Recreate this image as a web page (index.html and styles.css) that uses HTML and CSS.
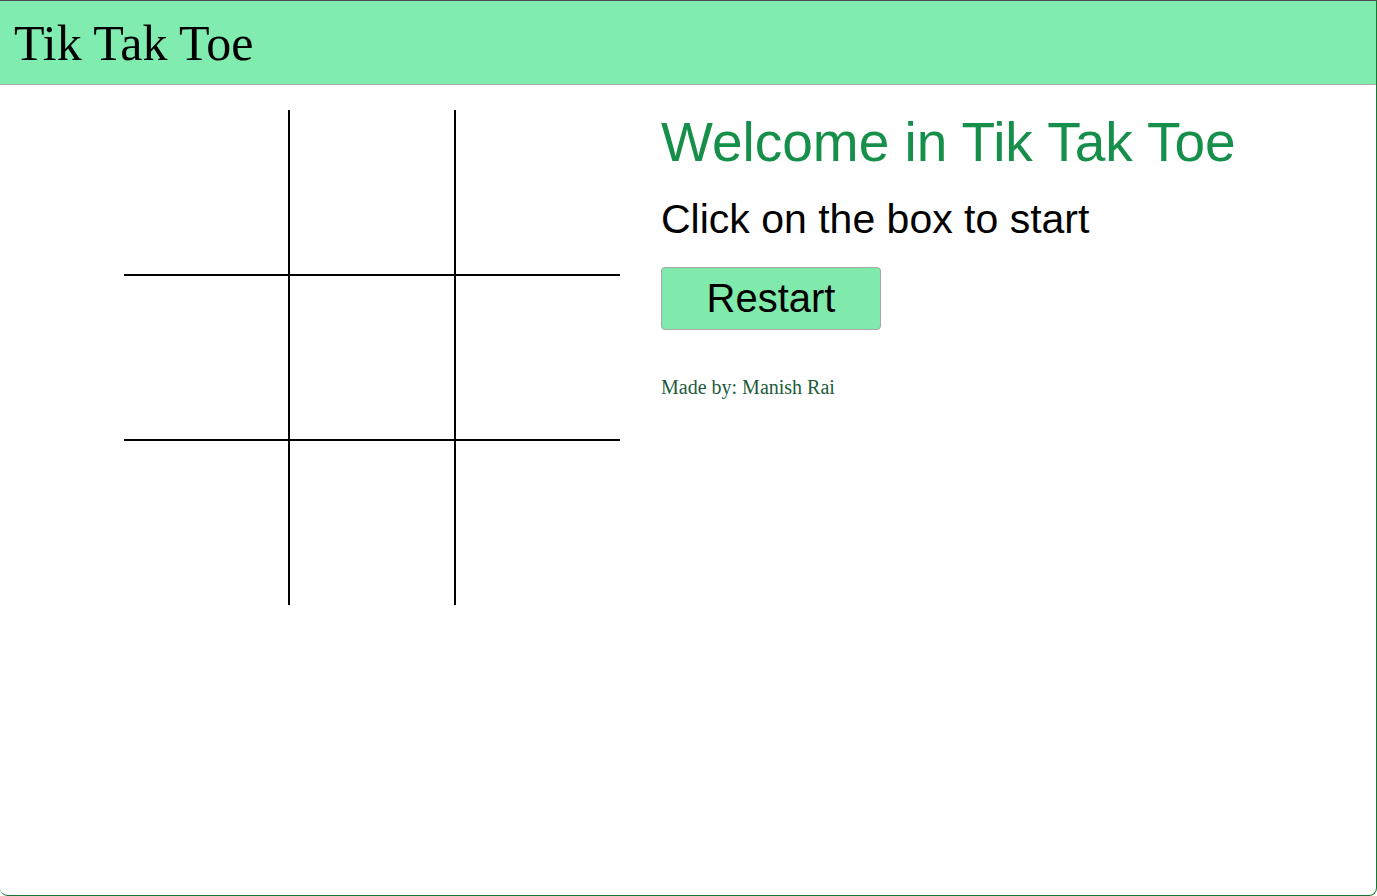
FILE: index.html
```html
<!DOCTYPE html>
<html lang="en">
<head>
<meta charset="utf-8">
<title>Tik Tak Toe</title>
<link rel="stylesheet" href="styles.css">
</head>
<body>
<div class="frame">
  <header class="topbar">
    <div class="brand">Tik Tak Toe</div>
  </header>
  <main class="main">
    <div class="board">
      <div class="box"></div>
      <div class="box"></div>
      <div class="box"></div>
      <div class="box"></div>
      <div class="box"></div>
      <div class="box"></div>
      <div class="box"></div>
      <div class="box"></div>
      <div class="box"></div>
    </div>
    <div class="info">
      <h1 class="welcome">Welcome in Tik Tak Toe</h1>
      <div class="status">Click on the box to start</div>
      <button class="restart">Restart</button>
      <div class="credit">Made by: Manish Rai</div>
    </div>
  </main>
</div>
</body>
</html>
```
FILE: styles.css
```css
html, body {
  margin: 0;
  padding: 0;
  background: #ffffff;
}
.frame {
  box-sizing: border-box;
  height: 896px;
  border-top: 1px solid #4d4d4d;
  border-right: 1px solid #127a2e;
  border-bottom: 1px solid #127a2e;
  border-bottom-right-radius: 8px;
  border-bottom-left-radius: 8px;
  overflow: hidden;
}
.topbar {
  height: 83px;
  background: #80ecaf;
  border-bottom: 1px solid #aaaaaa;
  display: flex;
  align-items: flex-start;
  padding-left: 14px;
}
.brand {
  font-family: "Liberation Serif", "Times New Roman", serif;
  font-size: 50px;
  line-height: 1;
  padding-top: 17px;
  color: #000;
}
.main {
  display: flex;
  align-items: flex-start;
  padding-top: 25px;
  padding-left: 124px;
  gap: 41px;
}
.board {
  width: 496px;
  height: 495px;
  display: grid;
  grid-template-columns: 166px 166px 164px;
  grid-template-rows: 166px 165px 164px;
}
.box {
  box-sizing: border-box;
}
.box:nth-child(3n+1), .box:nth-child(3n+2) {
  border-right: 2px solid #000;
}
.box:nth-child(-n+6) {
  border-bottom: 2px solid #000;
}
.info {
  display: flex;
  flex-direction: column;
  align-items: flex-start;
  font-family: "Liberation Sans", Arial, sans-serif;
}
.welcome {
  margin: 0;
  font-weight: normal;
  font-size: 55px;
  color: #168f4a;
}
.status {
  margin-top: 22px;
  font-size: 41px;
  color: #000;
}
.restart {
  margin-top: 24px;
  font-family: "Liberation Sans", Arial, sans-serif;
  font-size: 40px;
  color: #000;
  background: #80eaad;
  border: 1px solid #a6a6a6;
  border-radius: 4px;
  padding: 6px 43px;
  width: 220px;
  height: 63px;
}
.credit {
  margin-top: 46px;
  font-family: "Liberation Serif", "Times New Roman", serif;
  font-size: 20px;
  color: #1d5b3c;
}
```
